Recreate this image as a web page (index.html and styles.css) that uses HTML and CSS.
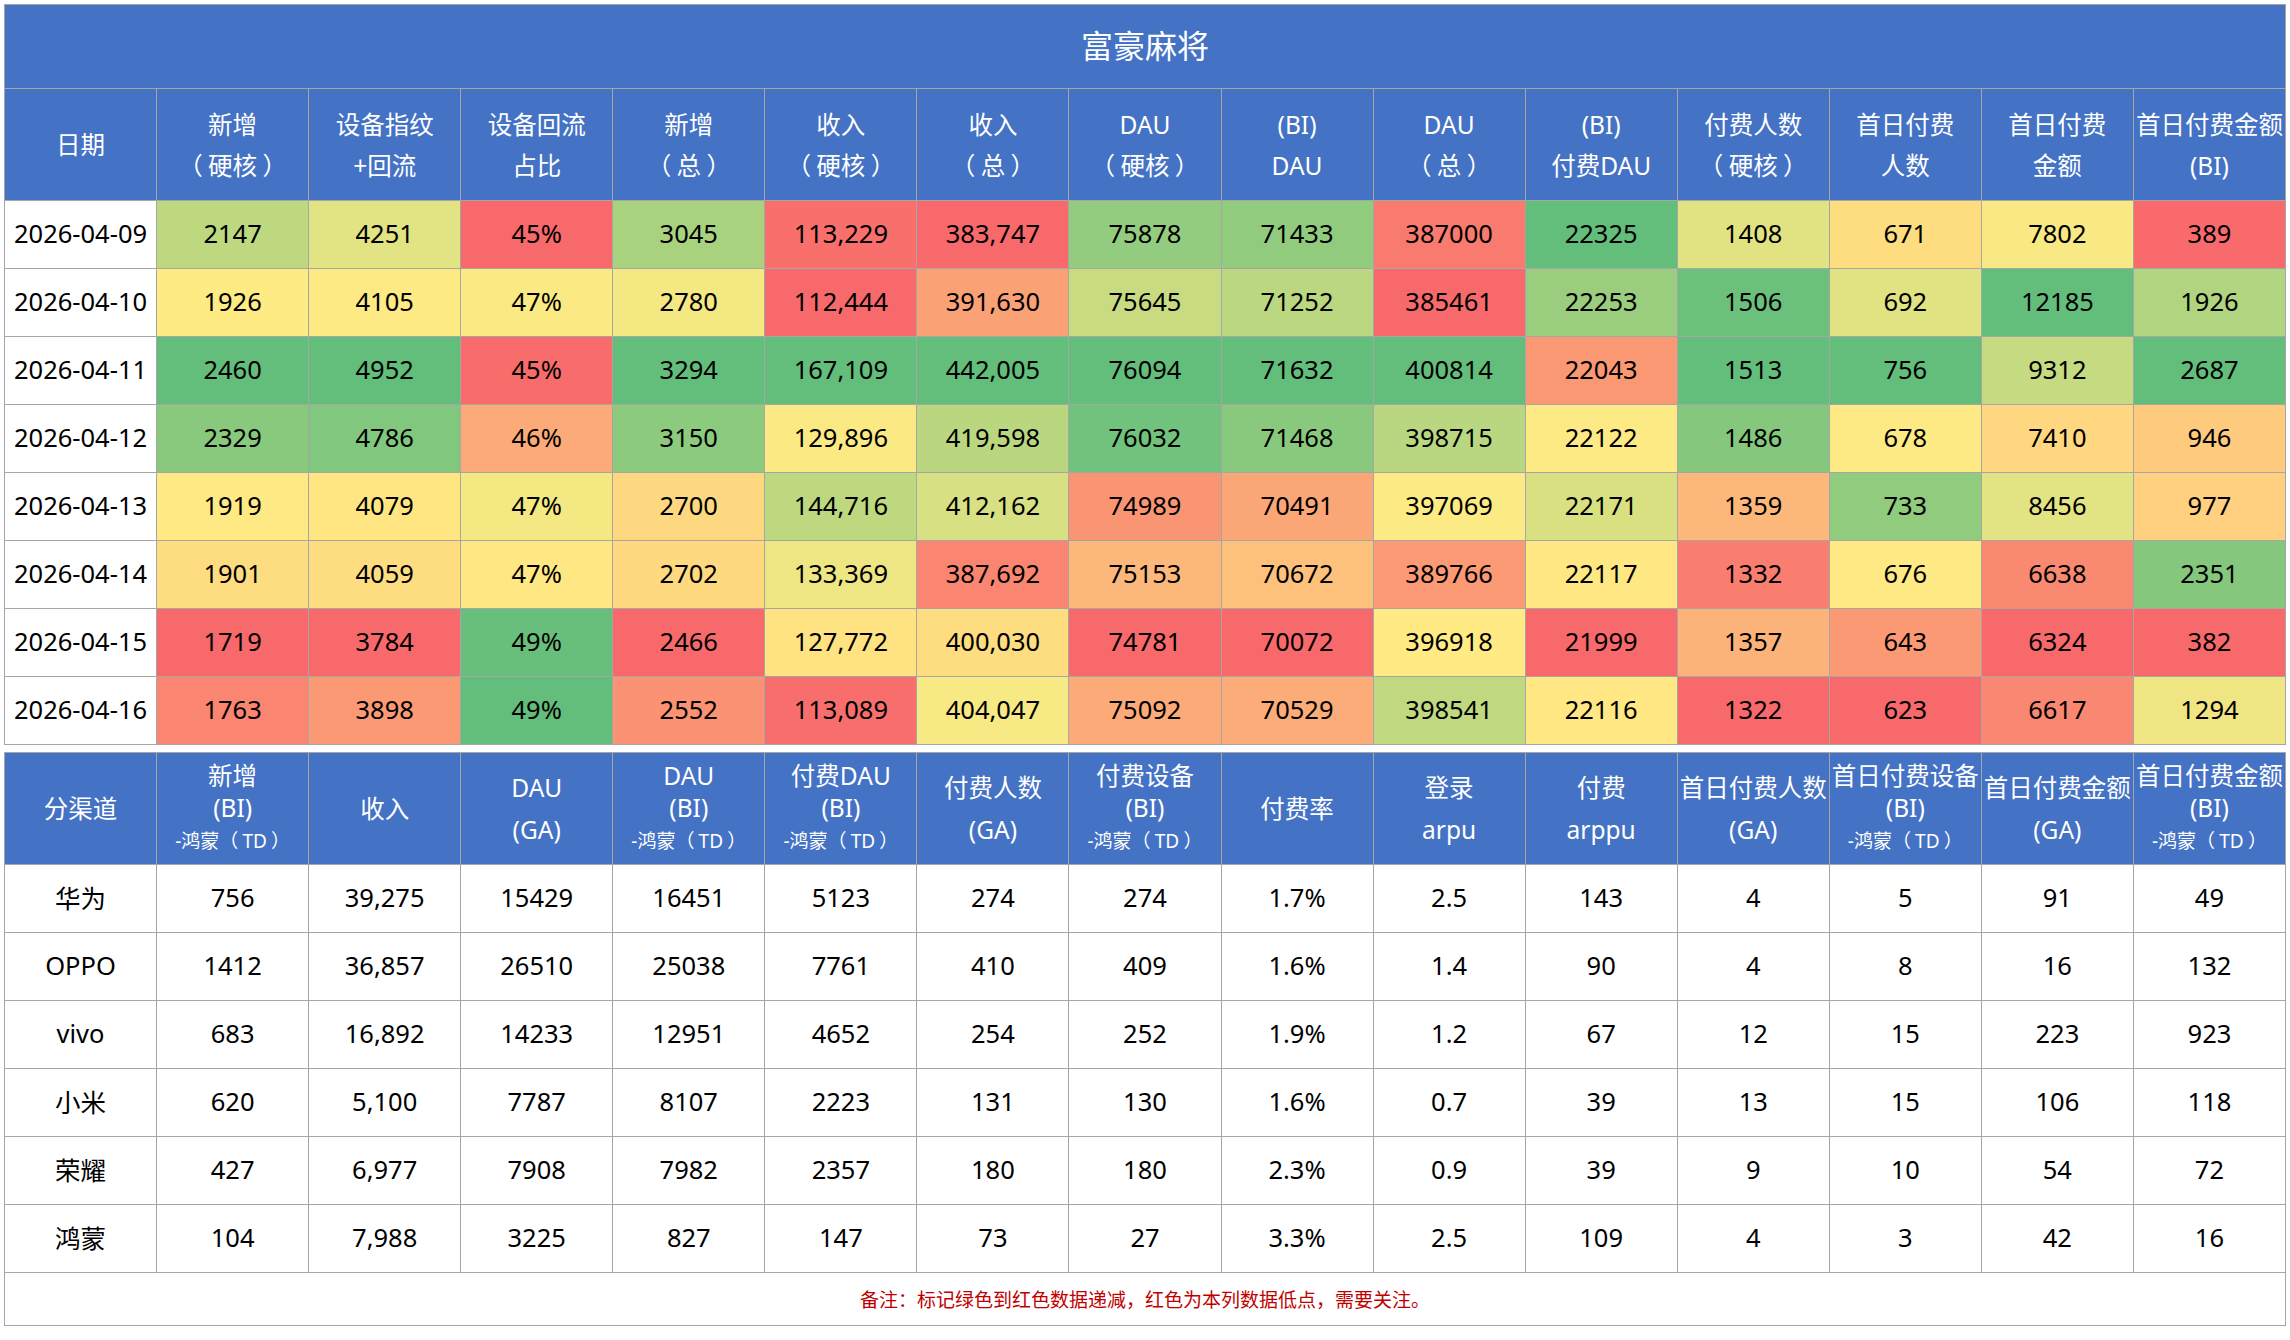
FILE: index.html
```html
<!DOCTYPE html>
<html lang="zh-CN">
<head>
<meta charset="utf-8">
<title>富豪麻将</title>
<link rel="stylesheet" href="styles.css">
</head>
<body>
<div class="report">
  <table class="sheet daily">
    <thead>
      <tr class="title"><th colspan="15">富豪麻将</th></tr>
      <tr class="head">
        <th><span class="ln">日期</span></th>
        <th><span class="ln">新增</span><span class="ln">（<span class="pin">硬核</span>）</span></th>
        <th><span class="ln">设备指纹</span><span class="ln">+回流</span></th>
        <th><span class="ln">设备回流</span><span class="ln">占比</span></th>
        <th><span class="ln">新增</span><span class="ln">（<span class="pin">总</span>）</span></th>
        <th><span class="ln">收入</span><span class="ln">（<span class="pin">硬核</span>）</span></th>
        <th><span class="ln">收入</span><span class="ln">（<span class="pin">总</span>）</span></th>
        <th><span class="ln">DAU</span><span class="ln">（<span class="pin">硬核</span>）</span></th>
        <th><span class="ln">(BI)</span><span class="ln">DAU</span></th>
        <th><span class="ln">DAU</span><span class="ln">（<span class="pin">总</span>）</span></th>
        <th><span class="ln">(BI)</span><span class="ln">付费DAU</span></th>
        <th><span class="ln">付费人数</span><span class="ln">（<span class="pin">硬核</span>）</span></th>
        <th><span class="ln">首日付费</span><span class="ln">人数</span></th>
        <th><span class="ln">首日付费</span><span class="ln">金额</span></th>
        <th><span class="ln">首日付费金额</span><span class="ln">(BI)</span></th>
      </tr>
    </thead>
    <tbody>
      <tr><td class="label">2026-04-09</td><td>2147</td><td>4251</td><td data-v="0.4500">45%</td><td>3045</td><td>113,229</td><td>383,747</td><td>75878</td><td>71433</td><td>387000</td><td>22325</td><td>1408</td><td>671</td><td>7802</td><td>389</td></tr>
      <tr><td class="label">2026-04-10</td><td>1926</td><td>4105</td><td data-v="0.4700">47%</td><td>2780</td><td>112,444</td><td>391,630</td><td>75645</td><td>71252</td><td>385461</td><td>22253</td><td>1506</td><td>692</td><td>12185</td><td>1926</td></tr>
      <tr><td class="label">2026-04-11</td><td>2460</td><td>4952</td><td data-v="0.4505">45%</td><td>3294</td><td>167,109</td><td>442,005</td><td>76094</td><td>71632</td><td>400814</td><td>22043</td><td>1513</td><td>756</td><td>9312</td><td>2687</td></tr>
      <tr><td class="label">2026-04-12</td><td>2329</td><td>4786</td><td data-v="0.4598">46%</td><td>3150</td><td>129,896</td><td>419,598</td><td>76032</td><td>71468</td><td>398715</td><td>22122</td><td>1486</td><td>678</td><td>7410</td><td>946</td></tr>
      <tr><td class="label">2026-04-13</td><td>1919</td><td>4079</td><td data-v="0.4710">47%</td><td>2700</td><td>144,716</td><td>412,162</td><td>74989</td><td>70491</td><td>397069</td><td>22171</td><td>1359</td><td>733</td><td>8456</td><td>977</td></tr>
      <tr><td class="label">2026-04-14</td><td>1901</td><td>4059</td><td data-v="0.4690">47%</td><td>2702</td><td>133,369</td><td>387,692</td><td>75153</td><td>70672</td><td>389766</td><td>22117</td><td>1332</td><td>676</td><td>6638</td><td>2351</td></tr>
      <tr><td class="label">2026-04-15</td><td>1719</td><td>3784</td><td data-v="0.4895">49%</td><td>2466</td><td>127,772</td><td>400,030</td><td>74781</td><td>70072</td><td>396918</td><td>21999</td><td>1357</td><td>643</td><td>6324</td><td>382</td></tr>
      <tr><td class="label">2026-04-16</td><td>1763</td><td>3898</td><td data-v="0.4900">49%</td><td>2552</td><td>113,089</td><td>404,047</td><td>75092</td><td>70529</td><td>398541</td><td>22116</td><td>1322</td><td>623</td><td>6617</td><td>1294</td></tr>
    </tbody>
  </table>

  <table class="sheet channel">
    <thead>
      <tr class="head head2">
        <th><span class="ln">分渠道</span></th>
        <th class="tri"><span class="ln">新增</span><span class="ln">(BI)</span><span class="ln sub">-鸿蒙（<span class="pin">TD</span>）</span></th>
        <th><span class="ln">收入</span></th>
        <th><span class="ln">DAU</span><span class="ln">(GA)</span></th>
        <th class="tri"><span class="ln">DAU</span><span class="ln">(BI)</span><span class="ln sub">-鸿蒙（<span class="pin">TD</span>）</span></th>
        <th class="tri"><span class="ln">付费DAU</span><span class="ln">(BI)</span><span class="ln sub">-鸿蒙（<span class="pin">TD</span>）</span></th>
        <th><span class="ln">付费人数</span><span class="ln">(GA)</span></th>
        <th class="tri"><span class="ln">付费设备</span><span class="ln">(BI)</span><span class="ln sub">-鸿蒙（<span class="pin">TD</span>）</span></th>
        <th><span class="ln">付费率</span></th>
        <th><span class="ln">登录</span><span class="ln">arpu</span></th>
        <th><span class="ln">付费</span><span class="ln">arppu</span></th>
        <th><span class="ln">首日付费人数</span><span class="ln">(GA)</span></th>
        <th class="tri"><span class="ln">首日付费设备</span><span class="ln">(BI)</span><span class="ln sub">-鸿蒙（<span class="pin">TD</span>）</span></th>
        <th><span class="ln">首日付费金额</span><span class="ln">(GA)</span></th>
        <th class="tri"><span class="ln">首日付费金额</span><span class="ln">(BI)</span><span class="ln sub">-鸿蒙（<span class="pin">TD</span>）</span></th>
      </tr>
    </thead>
    <tbody>
      <tr><td class="label">华为</td><td>756</td><td>39,275</td><td>15429</td><td>16451</td><td>5123</td><td>274</td><td>274</td><td>1.7%</td><td>2.5</td><td>143</td><td>4</td><td>5</td><td>91</td><td>49</td></tr>
      <tr><td class="label">OPPO</td><td>1412</td><td>36,857</td><td>26510</td><td>25038</td><td>7761</td><td>410</td><td>409</td><td>1.6%</td><td>1.4</td><td>90</td><td>4</td><td>8</td><td>16</td><td>132</td></tr>
      <tr><td class="label">vivo</td><td>683</td><td>16,892</td><td>14233</td><td>12951</td><td>4652</td><td>254</td><td>252</td><td>1.9%</td><td>1.2</td><td>67</td><td>12</td><td>15</td><td>223</td><td>923</td></tr>
      <tr><td class="label">小米</td><td>620</td><td>5,100</td><td>7787</td><td>8107</td><td>2223</td><td>131</td><td>130</td><td>1.6%</td><td>0.7</td><td>39</td><td>13</td><td>15</td><td>106</td><td>118</td></tr>
      <tr><td class="label">荣耀</td><td>427</td><td>6,977</td><td>7908</td><td>7982</td><td>2357</td><td>180</td><td>180</td><td>2.3%</td><td>0.9</td><td>39</td><td>9</td><td>10</td><td>54</td><td>72</td></tr>
      <tr><td class="label">鸿蒙</td><td>104</td><td>7,988</td><td>3225</td><td>827</td><td>147</td><td>73</td><td>27</td><td>3.3%</td><td>2.5</td><td>109</td><td>4</td><td>3</td><td>42</td><td>16</td></tr>
    </tbody>
    <tfoot>
      <tr><td class="note" colspan="15">备注：标记绿色到红色数据递减，红色为本列数据低点，需要关注。</td></tr>
    </tfoot>
  </table>
</div>
<script src="script.js"></script>
</body>
</html>
```

FILE: styles.css
```css
html, body {
  background: #ffffff;
}

body {
  margin: 4px;
  font-family: "Noto Sans", "Noto Sans CJK SC", sans-serif;
  color: #000000;
}

.report {
  display: flex;
  flex-direction: column;
  gap: 7px;
  width: 2282px;
}

.sheet {
  width: 2282px;
  border-collapse: collapse;
  table-layout: fixed;
}

.sheet th,
.sheet td {
  border: 1px solid #a6a6a6;
  padding: 0;
  text-align: center;
  vertical-align: middle;
  white-space: nowrap;
  overflow: visible;
}

.title th {
  height: 78px;
  padding-bottom: 5px;
  background: #4472c4;
  color: #ffffff;
  font-size: 32px;
  font-weight: normal;
}

.head th {
  height: 111px;
  background: #4472c4;
  color: #ffffff;
  font-size: 24.5px;
  font-weight: normal;
  line-height: 41px;
}

.head2 th {
  line-height: 42px;
}

.head2 th.tri {
  line-height: 32px;
}

.ln {
  display: block;
}

.pin {
  padding: 0 0.22em;
}

.head2 th.tri .sub {
  font-size: 19px;
  line-height: 34px;
}

.sheet tbody td {
  height: 63px;
  padding-bottom: 4px;
  font-size: 25.5px;
  background: #ffffff;
  color: #000000;
}

.note {
  height: 52px;
  padding-bottom: 3px;
  font-size: 19px;
  color: #c00000;
  background: #ffffff;
}
```

FILE: script.js
```js
(function () {
  var RED = [248, 105, 107];
  var YELLOW = [255, 235, 132];
  var GREEN = [99, 190, 123];

  function mix(a, b, t) {
    t = Math.max(0, Math.min(1, t));
    return 'rgb(' + a.map(function (v, i) {
      return Math.round(v + (b[i] - v) * t);
    }).join(',') + ')';
  }

  var rows = Array.prototype.slice.call(document.querySelectorAll('.daily tbody tr'));
  if (!rows.length) return;
  var n = rows[0].cells.length;

  for (var c = 1; c < n; c++) {
    var cells = rows.map(function (r) { return r.cells[c]; });
    var vals = cells.map(function (td) {
      var raw = td.dataset.v !== undefined ? td.dataset.v : td.textContent.replace(/[,%\s]/g, '');
      return parseFloat(raw);
    });
    var s = vals.slice().sort(function (a, b) { return a - b; });
    var min = s[0];
    var max = s[s.length - 1];
    var p = (s.length - 1) * 0.5;
    var lo = Math.floor(p);
    var hi = Math.ceil(p);
    var mid = s[lo] + (s[hi] - s[lo]) * (p - lo);

    cells.forEach(function (td, i) {
      var v = vals[i];
      var col;
      if (v <= mid) {
        col = mix(RED, YELLOW, mid === min ? 1 : (v - min) / (mid - min));
      } else {
        col = mix(YELLOW, GREEN, max === mid ? 1 : (v - mid) / (max - mid));
      }
      td.style.backgroundColor = col;
    });
  }
})();
```
